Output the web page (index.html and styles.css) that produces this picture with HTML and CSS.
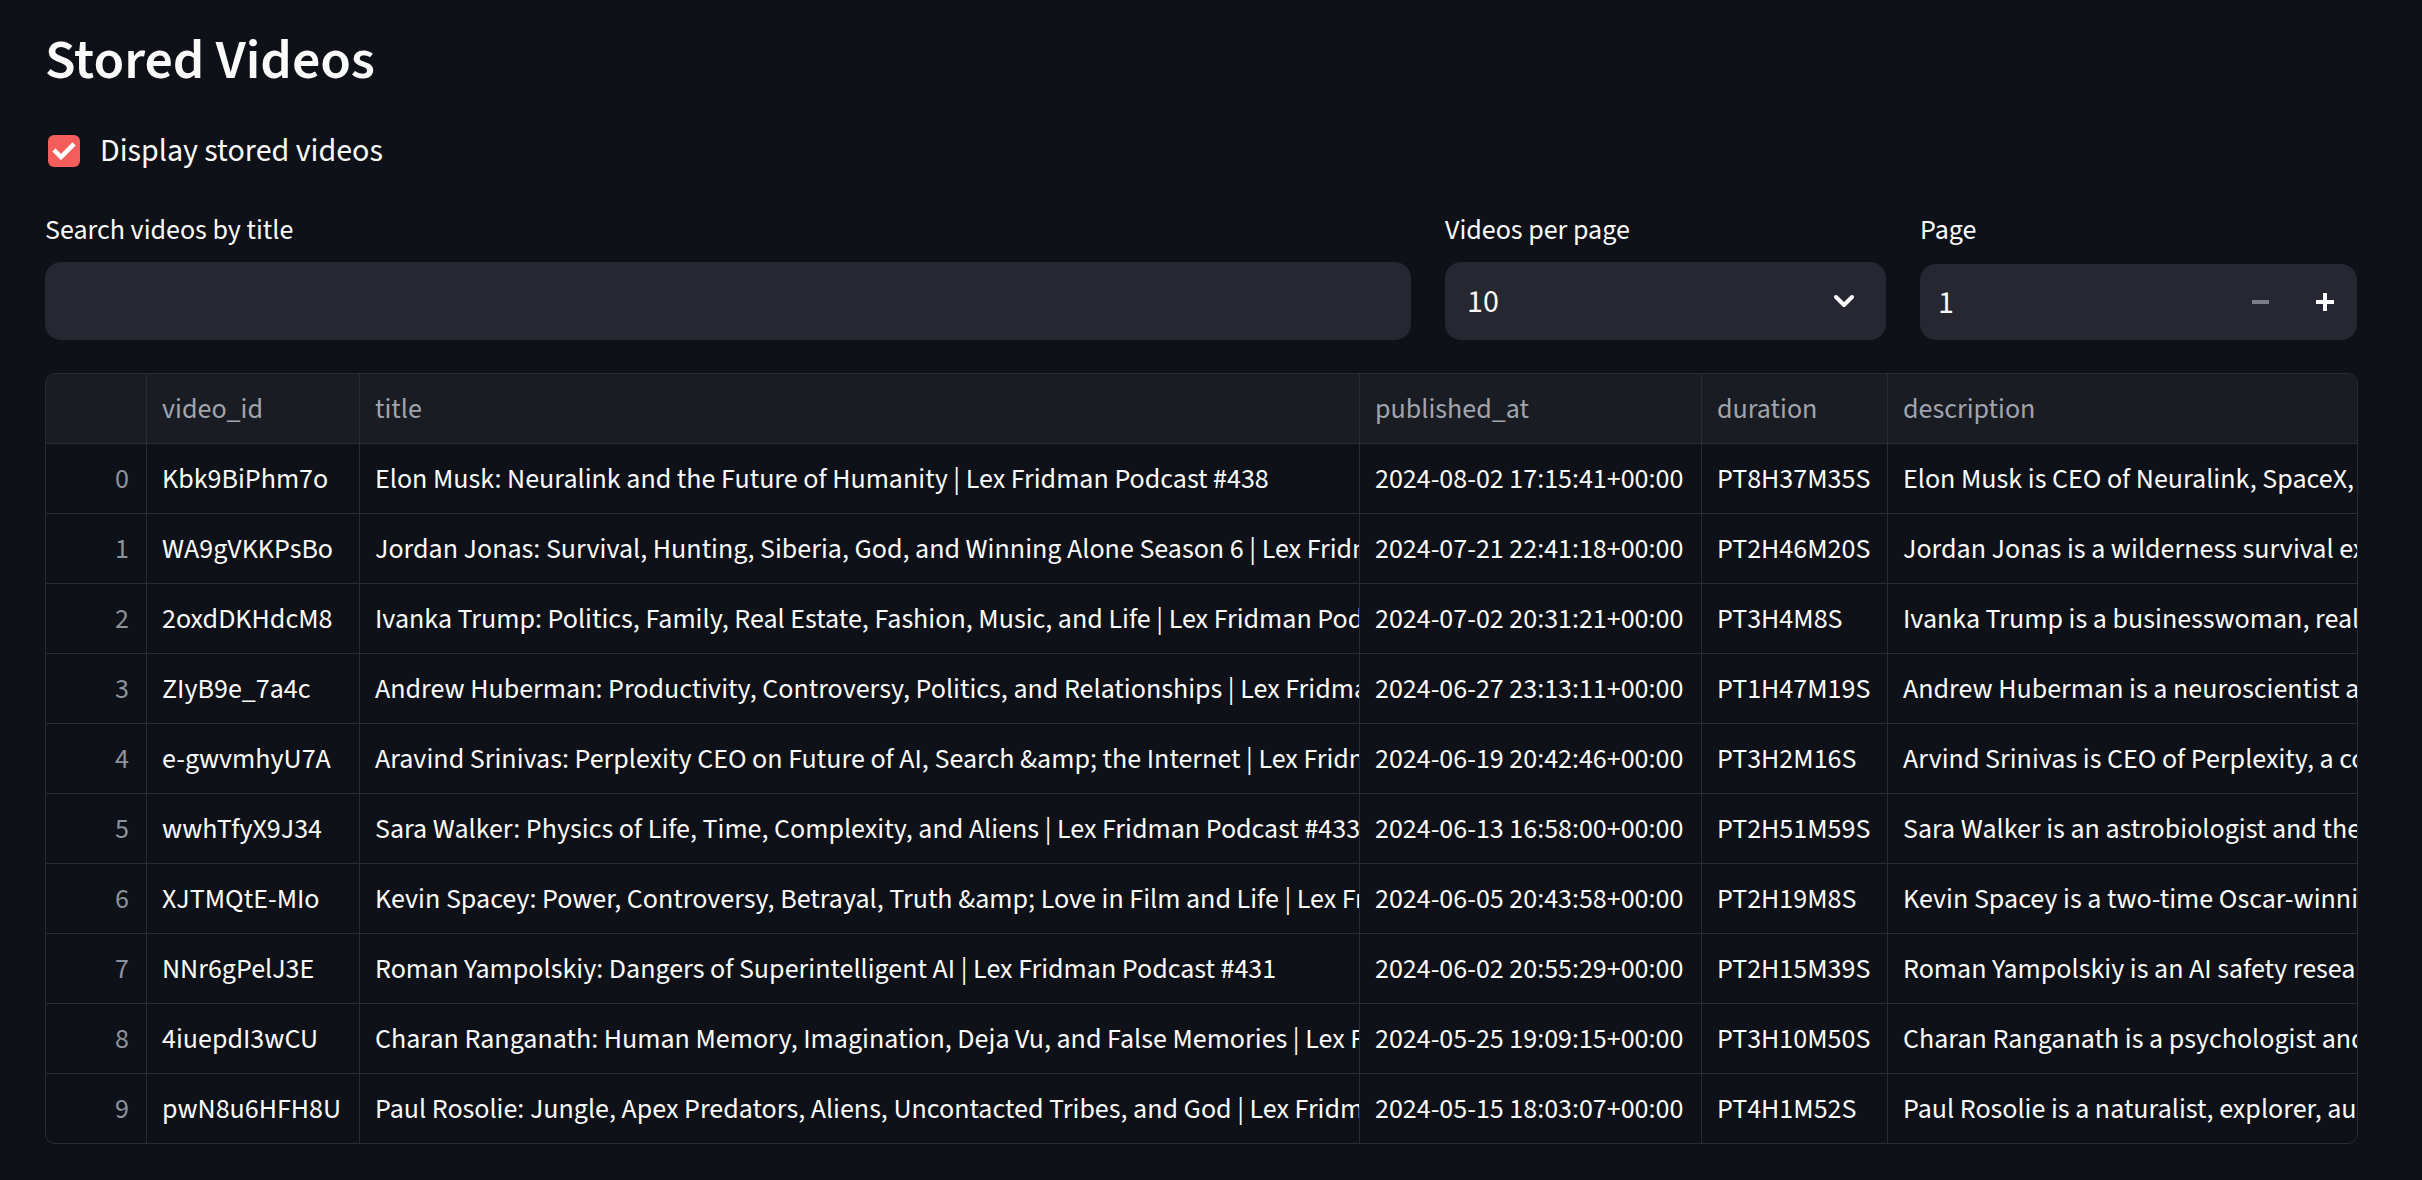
FILE: index.html
```html
<!DOCTYPE html>
<html lang="en">
<head>
<meta charset="utf-8">
<title>Stored Videos</title>
<link rel="stylesheet" href="styles.css">
</head>
<body>
<main class="main">
  <h3 class="title">Stored Videos</h3>

  <label class="checkbox-row">
    <span class="checkbox">
      <svg width="32" height="32" viewBox="0 0 32 32"><polyline points="7.5,16.5 13,22 24.5,10.5" fill="none" stroke="#ffffff" stroke-width="4.5" stroke-linecap="square"/></svg>
    </span>
    <span class="checkbox-label">Display stored videos</span>
  </label>

  <div class="controls">
    <div class="field">
      <div class="field-label">Search videos by title</div>
      <div class="input"></div>
    </div>
    <div class="field">
      <div class="field-label">Videos per page</div>
      <div class="input select">
        <span class="value">10</span>
        <svg class="chevron" width="22" height="14" viewBox="0 0 22 14"><polyline points="3,3 11,11 19,3" fill="none" stroke="#fafafa" stroke-width="4" stroke-linecap="round" stroke-linejoin="round"/></svg>
      </div>
    </div>
    <div class="field">
      <div class="field-label">Page</div>
      <div class="input number">
        <span class="value num-value">1</span>
        <span class="step"><svg width="18" height="18" viewBox="0 0 18 18"><rect x="0" y="7" width="17" height="4" fill="#7a7d8a"/></svg></span>
        <span class="step"><svg width="18" height="18" viewBox="0 0 18 18"><rect x="0" y="7" width="18" height="4" fill="#ffffff"/><rect x="7" y="0" width="4" height="18" fill="#ffffff"/></svg></span>
      </div>
    </div>
  </div>

  <div class="table">
    <div class="row head">
      <div class="cell idx"></div>
      <div class="cell">video_id</div>
      <div class="cell">title</div>
      <div class="cell">published_at</div>
      <div class="cell">duration</div>
      <div class="cell">description</div>
    </div>
    <div class="row">
      <div class="cell idx">0</div>
      <div class="cell">Kbk9BiPhm7o</div>
      <div class="cell">Elon Musk: Neuralink and the Future of Humanity | Lex Fridman Podcast #438</div>
      <div class="cell">2024-08-02 17:15:41+00:00</div>
      <div class="cell">PT8H37M35S</div>
      <div class="cell">Elon Musk is CEO of Neuralink, SpaceX, Tesla, xAI, and CTO of X.</div>
    </div>
    <div class="row">
      <div class="cell idx">1</div>
      <div class="cell">WA9gVKKPsBo</div>
      <div class="cell">Jordan Jonas: Survival, Hunting, Siberia, God, and Winning Alone Season 6 | Lex Fridman Podcast #437</div>
      <div class="cell">2024-07-21 22:41:18+00:00</div>
      <div class="cell">PT2H46M20S</div>
      <div class="cell">Jordan Jonas is a wilderness survival expert, explorer, hunter and guide.</div>
    </div>
    <div class="row">
      <div class="cell idx">2</div>
      <div class="cell">2oxdDKHdcM8</div>
      <div class="cell">Ivanka Trump: Politics, Family, Real Estate, Fashion, Music, and Life | Lex Fridman Podcast #436</div>
      <div class="cell">2024-07-02 20:31:21+00:00</div>
      <div class="cell">PT3H4M8S</div>
      <div class="cell">Ivanka Trump is a businesswoman, real estate developer, and former advisor.</div>
    </div>
    <div class="row">
      <div class="cell idx">3</div>
      <div class="cell">ZIyB9e_7a4c</div>
      <div class="cell">Andrew Huberman: Productivity, Controversy, Politics, and Relationships | Lex Fridman Podcast #435</div>
      <div class="cell">2024-06-27 23:13:11+00:00</div>
      <div class="cell">PT1H47M19S</div>
      <div class="cell">Andrew Huberman is a neuroscientist at Stanford and host of the Huberman Lab Podcast.</div>
    </div>
    <div class="row">
      <div class="cell idx">4</div>
      <div class="cell">e-gwvmhyU7A</div>
      <div class="cell">Aravind Srinivas: Perplexity CEO on Future of AI, Search &amp;amp; the Internet | Lex Fridman Podcast #434</div>
      <div class="cell">2024-06-19 20:42:46+00:00</div>
      <div class="cell">PT3H2M16S</div>
      <div class="cell">Arvind Srinivas is CEO of Perplexity, a company that aims to revolutionize search.</div>
    </div>
    <div class="row">
      <div class="cell idx">5</div>
      <div class="cell">wwhTfyX9J34</div>
      <div class="cell">Sara Walker: Physics of Life, Time, Complexity, and Aliens | Lex Fridman Podcast #433</div>
      <div class="cell">2024-06-13 16:58:00+00:00</div>
      <div class="cell">PT2H51M59S</div>
      <div class="cell">Sara Walker is an astrobiologist and theoretical physicist.</div>
    </div>
    <div class="row">
      <div class="cell idx">6</div>
      <div class="cell">XJTMQtE-MIo</div>
      <div class="cell">Kevin Spacey: Power, Controversy, Betrayal, Truth &amp;amp; Love in Film and Life | Lex Fridman Podcast #432</div>
      <div class="cell">2024-06-05 20:43:58+00:00</div>
      <div class="cell">PT2H19M8S</div>
      <div class="cell">Kevin Spacey is a two-time Oscar-winning actor, who starred in films.</div>
    </div>
    <div class="row">
      <div class="cell idx">7</div>
      <div class="cell">NNr6gPelJ3E</div>
      <div class="cell">Roman Yampolskiy: Dangers of Superintelligent AI | Lex Fridman Podcast #431</div>
      <div class="cell">2024-06-02 20:55:29+00:00</div>
      <div class="cell">PT2H15M39S</div>
      <div class="cell">Roman Yampolskiy is an AI safety researcher and author of a new book.</div>
    </div>
    <div class="row">
      <div class="cell idx">8</div>
      <div class="cell">4iuepdI3wCU</div>
      <div class="cell">Charan Ranganath: Human Memory, Imagination, Deja Vu, and False Memories | Lex Fridman Podcast #430</div>
      <div class="cell">2024-05-25 19:09:15+00:00</div>
      <div class="cell">PT3H10M50S</div>
      <div class="cell">Charan Ranganath is a psychologist and neuroscientist at UC Davis.</div>
    </div>
    <div class="row last">
      <div class="cell idx">9</div>
      <div class="cell">pwN8u6HFH8U</div>
      <div class="cell">Paul Rosolie: Jungle, Apex Predators, Aliens, Uncontacted Tribes, and God | Lex Fridman Podcast #429</div>
      <div class="cell">2024-05-15 18:03:07+00:00</div>
      <div class="cell">PT4H1M52S</div>
      <div class="cell">Paul Rosolie is a naturalist, explorer, author, and founder of Junglekeepers.</div>
    </div>
  </div>
</main>
</body>
</html>
```
FILE: styles.css
```css
* { box-sizing: border-box; }

html, body {
  margin: 0;
  padding: 0;
  background: #0e1117;
}

body {
  font-family: "Source Sans 3", "Source Sans Pro", Carlito, "Liberation Sans", sans-serif;
  color: #fafafa;
  width: 2422px;
  height: 1180px;
  overflow: hidden;
}

.main {
  width: 2313px;
  margin-left: 45px;
  padding-top: 27px;
  display: flex;
  flex-direction: column;
}

.title {
  margin: 0;
  font-size: 56px;
  line-height: 68px;
  font-weight: 600;
  letter-spacing: 0;
}

.checkbox-row {
  margin-top: 36px;
  height: 40px;
  display: flex;
  align-items: center;
  gap: 20px;
  padding-left: 3px;
}

.checkbox {
  width: 32px;
  height: 32px;
  border-radius: 6px;
  background: #f35d5b;
  display: flex;
}

.checkbox-label {
  font-size: 32px;
  line-height: 40px;
}

.controls {
  margin-top: 39px;
  display: grid;
  grid-template-columns: 1366px 441px 437px;
  column-gap: 34px;
}

.field {
  display: flex;
  flex-direction: column;
}

.field-label {
  font-size: 28px;
  line-height: 40px;
  height: 40px;
  margin-bottom: 12px;
}

.input {
  height: 78px;
  background: #262730;
  border-radius: 16px;
  display: flex;
  align-items: center;
  font-size: 32px;
}

.select {
  padding: 0 31px 0 22px;
  justify-content: space-between;
}

.value {
  line-height: 40px;
  padding-top: 2px;
}

.chevron {
  display: block;
}

.number {
  height: 76px;
  margin-top: 2px;
  padding-left: 18px;
}

.num-value {
  flex: 1;
}

.step {
  width: 64px;
  height: 76px;
  display: flex;
  align-items: center;
  justify-content: center;
}

.step svg {
  display: block;
}

.table {
  margin-top: 33px;
  border: 1px solid #2a2c33;
  border-radius: 10px;
  overflow: hidden;
  font-size: 28px;
}

.row {
  display: grid;
  grid-template-columns: 101px 213px 1000px 342px 186px 620px;
  height: 70px;
  border-bottom: 1px solid #2a2c33;
}

.row.last {
  border-bottom: none;
  height: 69px;
}

.head {
  background: #1a1c24;
  color: #a0a4ad;
}

.cell {
  border-right: 1px solid #2a2c33;
  padding: 0 15px;
  display: flex;
  align-items: center;
  white-space: nowrap;
  overflow: hidden;
}

.cell.idx {
  justify-content: flex-end;
  padding-right: 17px;
  color: #8e929b;
}
```
